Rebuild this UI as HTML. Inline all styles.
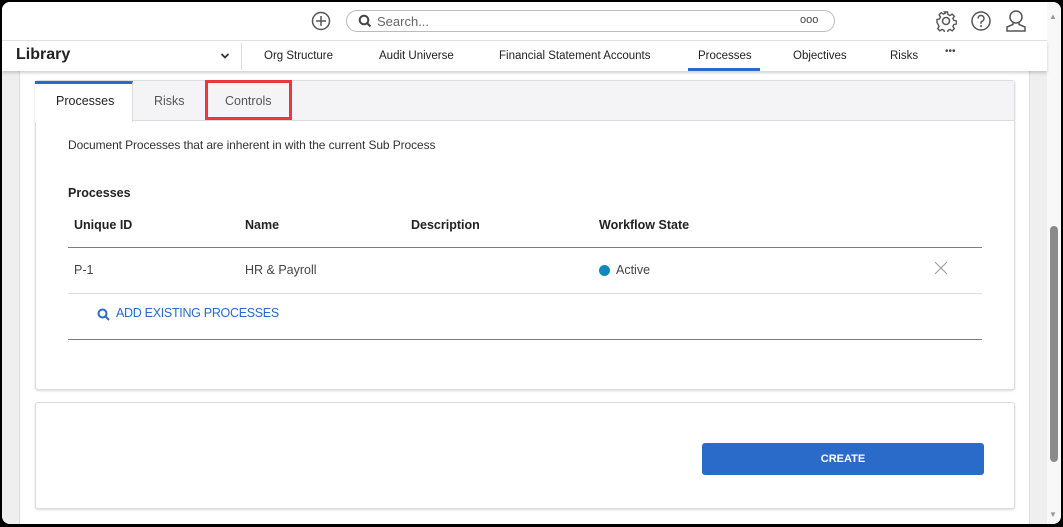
<!DOCTYPE html>
<html><head><style>
*{margin:0;padding:0;box-sizing:border-box}
body{width:1063px;height:527px;background:#000;font-family:"Liberation Sans",sans-serif;position:relative;overflow:hidden}
.win{position:absolute;left:2px;top:2px;width:1059px;height:522px;background:#fff;border-radius:8px;overflow:hidden}
.abs{position:absolute}
.t{position:absolute;white-space:nowrap}
</style></head><body>
<div class="win">
 <div class="abs" style="left:0;top:68px;width:18px;height:460px;background:#efefef;border-right:1px solid #dcdcdc"></div>
 <div class="abs" style="left:1027px;top:68px;width:18px;height:460px;background:#efefef;border-left:1px solid #dcdcdc"></div>
 <div class="abs" style="left:1045px;top:0;width:14px;height:522px;background:#f8f8f8"></div>
 <div class="abs" style="left:1048px;top:224px;width:8px;height:236px;background:#8a8a8a;border-radius:4px"></div>
 <div class="t" style="left:1047px;top:10px;font-size:8px;color:#999">▲</div>
 <div class="t" style="left:1047px;top:508px;font-size:8px;color:#999">▼</div>
 <div class="abs" style="left:0;top:0;width:1045px;height:39px;background:#fff;border-bottom:1px solid #e2e2e2"></div>
 <svg class="abs" style="left:309px;top:9px" width="20" height="20" viewBox="0 0 20 20"><circle cx="10" cy="10" r="8.5" fill="none" stroke="#555" stroke-width="1.5"/><path d="M10 5v10M5 10h10" stroke="#555" stroke-width="1.5"/></svg>
 <div class="abs" style="left:344px;top:8px;width:489px;height:22px;border:1px solid #bbb;border-radius:11px"></div>
 <svg class="abs" style="left:356px;top:12px" width="14" height="14" viewBox="0 0 14 14"><circle cx="6" cy="6" r="4.3" fill="none" stroke="#444" stroke-width="2"/><path d="M9 9l3.5 3.5" stroke="#444" stroke-width="2"/></svg>
 <div class="t" style="left:375px;top:12px;font-size:13px;color:#666">Search...</div>
 <div class="t" style="left:798px;top:12px;font-size:11px;color:#444;letter-spacing:0px">ooo</div>
 <svg class="abs" style="left:933px;top:8px" width="22" height="22" viewBox="0 0 22 22"><circle cx="11" cy="11" r="3.5" fill="none" stroke="#555" stroke-width="1.5"/><path d="M9.5 2h3l.5 2.5 2 1 2.2-1.4 2.1 2.1-1.4 2.2 1 2 2.6.6v3l-2.6.5-1 2 1.4 2.2-2.1 2.1-2.2-1.4-2 1-.5 2.6h-3l-.5-2.6-2-1-2.2 1.4-2.1-2.1 1.4-2.2-1-2L2 12.5v-3l2.5-.5 1-2-1.4-2.2 2.1-2.1 2.2 1.4 2-1z" fill="none" stroke="#555" stroke-width="1.4"/></svg>
 <svg class="abs" style="left:968px;top:8px" width="22" height="22" viewBox="0 0 22 22"><circle cx="11" cy="11" r="9" fill="none" stroke="#555" stroke-width="1.5"/><path d="M8 8.5a3 3 0 1 1 4 2.8c-.7.3-1 .8-1 1.5v1" fill="none" stroke="#555" stroke-width="1.5"/><circle cx="11" cy="16" r="1" fill="#555"/></svg>
 <svg class="abs" style="left:1003px;top:7px" width="22" height="24" viewBox="0 0 22 24"><circle cx="11" cy="8" r="6" fill="none" stroke="#555" stroke-width="1.5"/><path d="M8 13.5v2L2 18v4h18v-4l-6-2.5v-2" fill="none" stroke="#555" stroke-width="1.5"/></svg>
 <div class="abs" style="left:0;top:39px;width:1045px;height:30px;background:#fff;box-shadow:0 2px 3px rgba(0,0,0,.18)"></div>
 <div class="t" style="left:14px;top:44px;font-size:16px;color:#222;font-weight:600">Library</div>
 <svg class="abs" style="left:218px;top:50px" width="10" height="8" viewBox="0 0 10 8"><path d="M1.5 2l3.5 3.5L8.5 2" fill="none" stroke="#333" stroke-width="1.8"/></svg>
 <div class="abs" style="left:239px;top:41px;width:1px;height:27px;background:#ddd"></div>
 <div class="t" style="left:262px;top:48px;font-size:11.5px;color:#222">Org Structure</div>
 <div class="t" style="left:377px;top:48px;font-size:11.5px;color:#222">Audit Universe</div>
 <div class="t" style="left:497px;top:48px;font-size:11.5px;color:#222">Financial Statement Accounts</div>
 <div class="t" style="left:696px;top:48px;font-size:11.5px;color:#222">Processes</div>
 <div class="abs" style="left:686px;top:66px;width:72px;height:3px;background:#2a6ac8"></div>
 <div class="t" style="left:791px;top:48px;font-size:11.5px;color:#222">Objectives</div>
 <div class="t" style="left:888px;top:48px;font-size:11.5px;color:#222">Risks</div>
 <div class="t" style="left:943px;top:44px;font-size:10px;color:#444">•••</div>
 <div class="abs" style="left:33px;top:78px;width:980px;height:310px;background:#fff;border:1px solid #ddd;border-radius:3px;box-shadow:0 1px 2px rgba(0,0,0,.15)"></div>
 <div class="abs" style="left:34px;top:79px;width:978px;height:40px;background:#f4f4f6;border-bottom:1px solid #ddd"></div>
 <div class="abs" style="left:33px;top:79px;width:98px;height:41px;background:#fff;border-top:3px solid #2a6ac8;border-right:1px solid #ddd"></div>
 <div class="t" style="left:54px;top:92px;font-size:12.5px;color:#222">Processes</div>
 <div class="t" style="left:152px;top:92px;font-size:12.5px;color:#555">Risks</div>
 <div class="abs" style="left:203px;top:78px;width:87px;height:40px;border:3px solid #e8383d"></div>
 <div class="t" style="left:223px;top:92px;font-size:12.5px;color:#555">Controls</div>
 <div class="t" style="left:66px;top:136px;font-size:12px;color:#333;letter-spacing:-0.1px">Document Processes that are inherent in with the current Sub Process</div>
 <div class="t" style="left:66px;top:184px;font-size:12.5px;color:#222;font-weight:bold">Processes</div>
 <div class="t" style="left:72px;top:216px;font-size:12.5px;color:#222;font-weight:bold">Unique ID</div>
 <div class="t" style="left:243px;top:216px;font-size:12.5px;color:#222;font-weight:bold">Name</div>
 <div class="t" style="left:409px;top:216px;font-size:12.5px;color:#222;font-weight:bold">Description</div>
 <div class="t" style="left:597px;top:216px;font-size:12.5px;color:#222;font-weight:bold">Workflow State</div>
 <div class="abs" style="left:66px;top:245px;width:914px;height:1px;background:#7a7f87"></div>
 <div class="t" style="left:72px;top:261px;font-size:12.5px;color:#444">P-1</div>
 <div class="t" style="left:243px;top:261px;font-size:12.5px;color:#444">HR &amp; Payroll</div>
 <div class="abs" style="left:597px;top:263px;width:11px;height:11px;border-radius:50%;background:#1188bb"></div>
 <div class="t" style="left:614px;top:261px;font-size:12.5px;color:#444">Active</div>
 <svg class="abs" style="left:932px;top:259px" width="14" height="14" viewBox="0 0 14 14"><path d="M1 1l12 12M13 1L1 13" stroke="#999" stroke-width="1"/></svg>
 <div class="abs" style="left:66px;top:291px;width:914px;height:1px;background:#ddd"></div>
 <svg class="abs" style="left:95px;top:306px" width="13" height="13" viewBox="0 0 13 13"><circle cx="5.5" cy="5.5" r="4" fill="none" stroke="#2a6ac8" stroke-width="2"/><path d="M8.5 8.5l3.5 3.5" stroke="#2a6ac8" stroke-width="2"/></svg>
 <div class="t" style="left:114px;top:304px;font-size:12.5px;color:#2a6ac8;letter-spacing:-0.3px">ADD EXISTING PROCESSES</div>
 <div class="abs" style="left:66px;top:337px;width:914px;height:1px;background:#7a7f87"></div>
 <div class="abs" style="left:33px;top:400px;width:980px;height:107px;background:#fff;border:1px solid #ddd;border-radius:3px;box-shadow:0 1px 2px rgba(0,0,0,.15)"></div>
 <div class="abs" style="left:700px;top:441px;width:282px;height:32px;background:#2a6ac8;border-radius:3px;color:#fff;font-size:11px;font-weight:bold;text-align:center;line-height:32px">CREATE</div>
</div>
</body></html>
